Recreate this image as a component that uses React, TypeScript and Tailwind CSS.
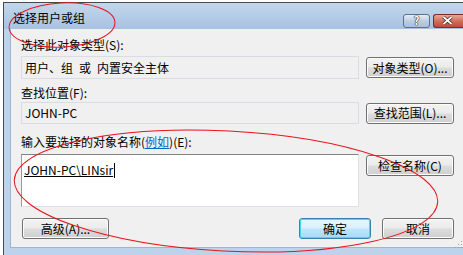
const font = { fontFamily: '"Noto Sans CJK SC", "Liberation Sans", sans-serif' };

function WinButton({ label, className = "" }: { label: string; className?: string }) {
  return (
    <div
      className={
        "h-[21px] flex items-center justify-center rounded-[3px] border border-[#707070] text-[12px] leading-none text-black bg-[linear-gradient(#f3f3f3_0%,#ebebeb_48%,#dddddd_52%,#cfcfcf_100%)] shadow-[inset_0_0_0_1px_#fcfcfc] " +
        className
      }
    >
      {label}
    </div>
  );
}

export default function App() {
  return (
    <div
      className="relative w-[463px] h-[255px] overflow-hidden bg-white flex"
      style={font}
    >
      <div className="w-[3px] shrink-0 bg-white" />
      <div className="flex-1 mt-[2px] flex flex-col border-t border-l border-[#4a4a4a] bg-[#bdd3ec]">
        {/* title bar */}
        <div className="h-[26px] shrink-0 flex items-center bg-[linear-gradient(#c3d7ec,#a7c2e1)]">
          <span className="ml-[9px] mt-[4px] text-[12px] leading-none text-black">选择用户或组</span>
          <div className="ml-auto flex items-center gap-[3px] mt-[9px]">
            <div className="w-[27px] h-[14px] rounded-[3px] border border-[#5f6f86] bg-[linear-gradient(#e4edf7,#bccde2_50%,#a9bfd9)] flex items-center justify-center">
              <span className="text-[11px] font-bold leading-none text-white [text-shadow:0_0_1px_#222,0_0_1px_#222,0_0_1px_#222]">?</span>
            </div>
            <div className="w-[30px] h-[14px] rounded-l-[3px] border border-r-0 border-[#7a2d22] bg-[linear-gradient(#e9a897,#d0705c_50%,#c24a36)] flex items-center justify-center pr-[3px]">
              <svg width="11" height="9" viewBox="0 0 11 9">
                <path d="M1.5 1 L9.5 8 M9.5 1 L1.5 8" stroke="#3b1a14" strokeWidth="3.2" />
                <path d="M1.5 1 L9.5 8 M9.5 1 L1.5 8" stroke="#ffffff" strokeWidth="1.8" />
              </svg>
            </div>
          </div>
        </div>
        {/* body with side frame */}
        <div className="flex-1 flex pl-[6px] pb-[7px]">
          <div className="flex-1 flex flex-col bg-[#f0f0f0] border-l border-b border-[#9fb4cd] pl-[10px] pr-[9px] pt-[8px]">
            <div className="h-[15px] leading-[15px] text-[12px] text-black">选择此对象类型(S):</div>
            <div className="mt-[4px] flex items-center gap-[7px]">
              <div className="w-[338px] h-[23px] border border-[#d9dde3] bg-[#f0f0f0] flex items-center pl-[3px] text-[12px] text-black whitespace-pre">
                {"用户、组\u2002或\u2002内置安全主体"}
              </div>
              <WinButton label="对象类型(O)..." className="w-[88px]" />
            </div>
            <div className="mt-[6px] h-[15px] leading-[15px] text-[12px] text-black">查找位置(F):</div>
            <div className="mt-[2px] flex items-center gap-[7px]">
              <div className="w-[338px] h-[22px] border border-[#d9dde3] bg-[#f0f0f0] flex items-center pl-[3px] text-[12px] text-black">
                JOHN-PC
              </div>
              <WinButton label="查找范围(L)..." className="w-[88px]" />
            </div>
            <div className="mt-[10px] h-[15px] leading-[15px] text-[12px] text-black">
              输入要选择的对象名称(<span className="text-[#0066cc] underline">例如</span>)(E):
            </div>
            <div className="mt-[5px] flex items-start gap-[7px]">
              <div className="w-[338px] h-[53px] border border-[#dfe3e8] border-t-[#838383] border-l-[#9a9a9a] bg-white pl-[2px] pt-[1px]">
                <span className="inline-block h-[15px] leading-[14px] text-[12px] text-black underline border-r border-black pr-[1px]">
                  JOHN-PC\LINsir
                </span>
              </div>
              <WinButton label="检查名称(C)" className="w-[88px] mt-[1px] h-[20px]" />
            </div>
            <div className="mt-[11px] flex items-center">
              <WinButton label="高级(A)..." className="w-[87px] ml-[1px]" />
              <div className="ml-auto w-[72px] h-[21px] flex items-center justify-center rounded-[3px] border border-[#3c7fb1] text-[12px] leading-none text-black bg-[linear-gradient(#eaf6fd_0%,#d9f0fc_48%,#bee6fd_52%,#a7d9f5_100%)] shadow-[inset_0_0_0_1px_#48d8fb]">
                确定
              </div>
              <WinButton label="取消" className="w-[72px] ml-[11px]" />
            </div>
          </div>
        </div>
      </div>
      {/* resize grip */}
      <svg className="absolute right-0 top-[240px]" width="9" height="8" viewBox="0 0 9 8">
        <rect x="7" y="1" width="1" height="1" fill="#a0a0a0" />
        <rect x="4" y="4" width="1" height="1" fill="#a0a0a0" />
        <rect x="7" y="4" width="1" height="1" fill="#a0a0a0" />
        <rect x="1" y="7" width="1" height="1" fill="#a0a0a0" />
        <rect x="4" y="7" width="1" height="1" fill="#a0a0a0" />
        <rect x="7" y="7" width="1" height="1" fill="#a0a0a0" />
      </svg>
      {/* red annotation marks */}
      <svg className="absolute inset-0 pointer-events-none" width="463" height="255" viewBox="0 0 463 255">
        <ellipse cx="62" cy="25" rx="53" ry="22" fill="none" stroke="#e8141c" strokeWidth="1" transform="rotate(-3 62 25)" />
        <ellipse cx="226" cy="191" rx="212" ry="60" fill="none" stroke="#e8141c" strokeWidth="1" transform="rotate(3 226 191)" />
      </svg>
    </div>
  );
}
